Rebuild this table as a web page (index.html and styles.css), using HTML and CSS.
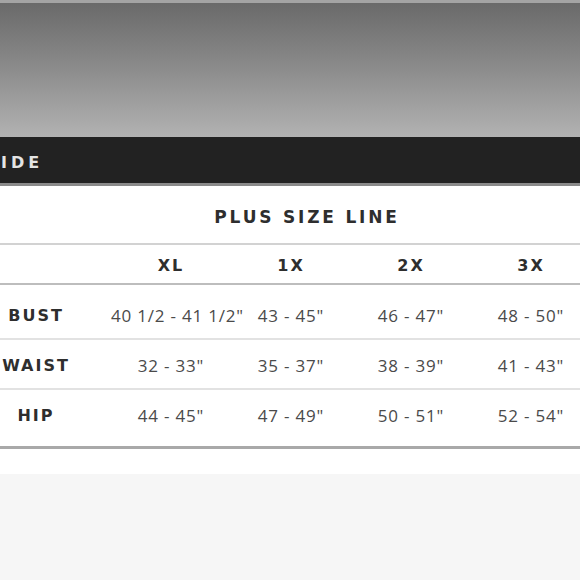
FILE: index.html
```html
<!DOCTYPE html>
<html>
<head>
<meta charset="utf-8">
<link rel="stylesheet" href="styles.css">
</head>
<body>
<div class="page">
  <div class="hero"></div>
  <div class="bar"><span class="bar-title">IDE</span></div>
  <div class="sheet">
    <h2 class="title">PLUS SIZE LINE</h2>
    <div class="table">
      <div class="row head">
        <span class="label"></span>
        <span class="cell">XL</span>
        <span class="cell">1X</span>
        <span class="cell">2X</span>
        <span class="cell">3X</span>
      </div>
      <div class="row bust">
        <span class="label">BUST</span>
        <span class="cell">40 1/2 - 41 1/2"</span>
        <span class="cell">43 - 45"</span>
        <span class="cell">46 - 47"</span>
        <span class="cell">48 - 50"</span>
      </div>
      <div class="row waist">
        <span class="label">WAIST</span>
        <span class="cell">32 - 33"</span>
        <span class="cell">35 - 37"</span>
        <span class="cell">38 - 39"</span>
        <span class="cell">41 - 43"</span>
      </div>
      <div class="row hip">
        <span class="label">HIP</span>
        <span class="cell">44 - 45"</span>
        <span class="cell">47 - 49"</span>
        <span class="cell">50 - 51"</span>
        <span class="cell">52 - 54"</span>
      </div>
    </div>
  </div>
  <div class="floor"></div>
</div>
</body>
</html>
```
FILE: styles.css
```css
html, body {
  margin: 0;
  padding: 0;
  background: #ffffff;
  overflow: hidden;
}
.page {
  width: 580px;
  height: 580px;
  display: flex;
  flex-direction: column;
  font-family: "DejaVu Sans", "Open Sans", sans-serif;
}
.hero {
  height: 134px;
  border-top: 3px solid #a4a4a4;
  background: linear-gradient(to bottom, #6a6a6a 0%, #858585 40%, #b2b2b2 100%);
}
.bar {
  height: 49px;
  box-sizing: border-box;
  padding-top: 4px;
  background: #222222;
  border-bottom: 3px solid #8a8a8a;
  display: flex;
  align-items: center;
}
.bar-title {
  color: #e4e4e4;
  font-weight: bold;
  font-size: 16px;
  letter-spacing: 4px;
  padding-left: 1px;
}
.sheet {
  display: flex;
  flex-direction: column;
  padding-top: 21px;
  padding-bottom: 25px;
  background: #ffffff;
}
.title {
  margin: 0 0 16px 0;
  text-align: center;
  font-size: 17px;
  font-weight: bold;
  letter-spacing: 2.8px;
  color: #2e2e2e;
  padding-left: 34px;
  height: 20px;
  line-height: 20px;
}
.table {
  border-top: 2px solid #d2d2d2;
  border-bottom: 3px solid #a9a9a9;
  display: flex;
  flex-direction: column;
}
.row {
  display: grid;
  grid-template-columns: 72px 39px 120px 120px 120px 120px;
  align-items: start;
  box-sizing: border-box;
  line-height: 20px;
  border-bottom: 2px solid #e2e2e2;
}
.row > :nth-child(2) {
  grid-column: 3;
}
.row.head {
  height: 40px;
  padding-top: 11px;
  border-bottom: 2px solid #bdbdbd;
}
.row.bust {
  height: 55px;
  padding-top: 21px;
}
.row.waist {
  height: 50px;
  padding-top: 16px;
}
.row.hip {
  height: 56px;
  padding-top: 16px;
  border-bottom: none;
}
.label {
  text-align: center;
  font-weight: bold;
  font-size: 16px;
  letter-spacing: 2px;
  color: #2e2e2e;
}
.cell {
  text-align: center;
  font-size: 17px;
  letter-spacing: 0.8px;
  color: #4a4a4a;
  white-space: nowrap;
  font-family: "Open Sans", "DejaVu Sans", sans-serif;
}
.head .cell {
  font-weight: bold;
  font-size: 16px;
  color: #2e2e2e;
  letter-spacing: 2px;
  font-family: "DejaVu Sans", "Open Sans", sans-serif;
}
.floor {
  flex: 1;
  background: #f6f6f6;
}
```
